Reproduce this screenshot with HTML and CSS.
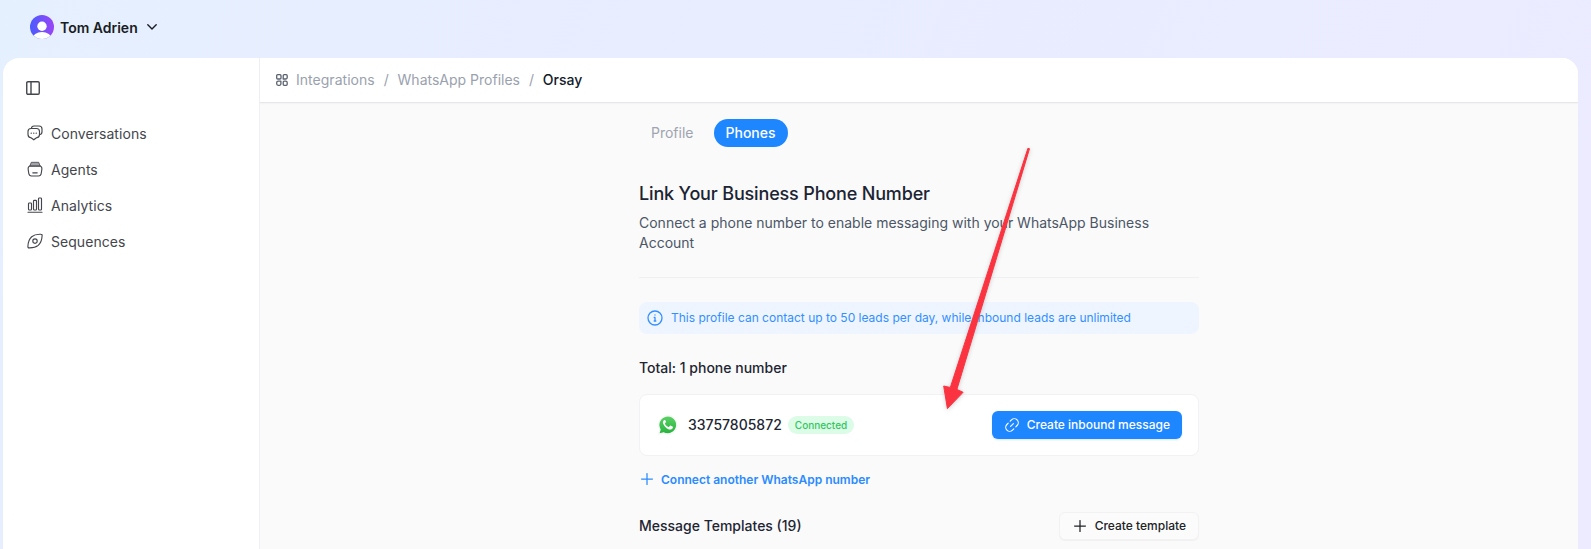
FILE: index.html
```html
<!DOCTYPE html>
<html lang="en">
<head>
<meta charset="utf-8">
<title>WhatsApp Profiles</title>
<link rel="stylesheet" href="styles.css">
</head>
<body>
<div class="app">
  <header class="topbar">
    <svg class="avatar" viewBox="0 0 24 24"><defs><linearGradient id="av" x1="0" y1="1" x2="1" y2="1"><stop offset="0" stop-color="#4a5cff"/><stop offset="1" stop-color="#9a45f5"/></linearGradient><clipPath id="avc"><circle cx="12" cy="12" r="12"/></clipPath></defs><g clip-path="url(#avc)"><rect width="24" height="24" fill="url(#av)"/><circle cx="12" cy="11.3" r="4.700" fill="#fff"/><ellipse cx="12" cy="24" rx="9.600" ry="7" fill="#fff"/></g></svg>
    <span class="user-name">Tom Adrien</span>
    <svg class="chevron" viewBox="0 0 10 6"><path d="M.8.8 5 5 9.200.8"/></svg>
  </header>
  <div class="panel">
    <aside class="sidebar">
      <svg class="icon toggle" viewBox="0 0 14 14"><rect x=".75" y=".75" width="12.500" height="12.500" rx="1.200"/><path d="M5 .75v12.500"/></svg>
      <nav class="nav">
        <a class="nav-item"><svg class="icon" viewBox="0 0 16 16"><path d="M4.400 3.300C4.600 1.700 5.300 1 7 1h5c2 0 3 1 3 3v2.800c0 1.800-.8 2.700-2.500 2.900"/><path d="M4 3.500h5.500c2 0 3 1 3 3v3c0 2-1 3-3 3.200L6.800 14.800 4 12.700C2 12.500 1 11.500 1 9.500v-3c0-2 1-3 3-3Z"/><path class="dots" d="M4.200 8.200h.1M6.700 8.200h.1M9.200 8.200h.1"/></svg>Conversations</a>
        <a class="nav-item"><svg class="icon" viewBox="0 0 16 16"><path fill="#a3a4a8" stroke-width=".8" d="M2.900 4.900 4.300 1.300h7.400l1.400 3.600Z"/><path d="M2.600 5h10.800c1.200.8 1.700 1.500 1.500 3l-.7 4.500c-.3 1.800-1 2.500-2.700 2.500h-7c-1.700 0-2.400-.7-2.700-2.500L1.100 8c-.2-1.500.3-2.200 1.500-3ZM5.800 11.800h4.400"/></svg>Agents</a>
        <a class="nav-item"><svg class="icon" viewBox="0 0 16 16"><path d="M1 15.200h14"/><rect x="1.500" y="6" width="3" height="7" rx=".8"/><rect x="6.500" y="3.400" width="3" height="9.600" rx=".8"/><rect x="11.500" y="1" width="3" height="12" rx=".8"/></svg>Analytics</a>
        <a class="nav-item"><svg class="icon" viewBox="0 0 16 16"><path d="M14 1.300C15 1.300 15.200 1.800 15.100 2.800 14.900 7 13.600 10.300 11.200 12.400 8.800 14.400 5.500 15 2 14.900 1.200 14.900.9 14.500.9 13.500 1 9.200 2.200 5.900 4.700 3.700 7.200 1.600 10.500 1.100 14 1.300Z"/><circle cx="8" cy="8.100" r="2.200"/></svg>Sequences</a>
      </nav>
    </aside>
    <main class="main">
      <div class="crumbs">
        <svg class="icon grid" viewBox="0 0 12 12"><path d="M1.800.700H4a1 1 0 0 1 1 1V4a1 1 0 0 1-1 1H1.700a1 1 0 0 1-1-1V1.800a1 1 0 0 1 1-1.100ZM8.200.700h2a1 1 0 0 1 1 1v1.800A1.500 1.500 0 0 1 9.700 5H7.200V1.700a1 1 0 0 1 1-1ZM2.200 7.200h2.700v2.600a1.500 1.500 0 0 1-1.500 1.500H2.200A1.500 1.500 0 0 1 .7 9.800V8.700a1.500 1.500 0 0 1 1.500-1.500ZM8.200 7.200h1.500a1.500 1.500 0 0 1 1.500 1.500v1.600a1 1 0 0 1-1 1h-2a1 1 0 0 1-1-1V8.200a1 1 0 0 1 1-1Z"/></svg>
        <span class="crumb c1">Integrations</span><span class="sep">/</span><span class="crumb">WhatsApp Profiles</span><span class="sep">/</span><span class="crumb current">Orsay</span>
      </div>
      <div class="content">
        <div class="tabs"><span class="tab">Profile</span><span class="tab active">Phones</span></div>
        <h1 class="title"><span>Link Your Business Phone Number</span></h1>
        <p class="desc"><span>Connect a phone number to enable messaging with your WhatsApp Business</span><br>Account</p>
        <div class="banner">
          <svg class="icon info" viewBox="0 0 16 16"><circle cx="8" cy="8" r="7"/><path d="M7.200 7.400H8V11M7.200 11h1.600M8 4.800v.3"/></svg>
          <span>This profile can contact up to 50 leads per day, while inbound leads are unlimited</span>
        </div>
        <h2 class="total"><span>Total: 1 phone number</span></h2>
        <div class="card">
          <svg class="wa" viewBox="0 0 20 20"><defs><linearGradient id="wg" x1="0" y1="0" x2="0" y2="1"><stop offset="0" stop-color="#5bd066"/><stop offset="1" stop-color="#27b43e"/></linearGradient></defs><path class="wa-rim" d="M.4 19.500 1.700 14.600A9.400 9.400 0 1 1 5.300 18.200Z"/><path fill="url(#wg)" d="M1.600 18.300 2.700 14.400A8.400 8.400 0 1 1 5.700 17.200Z"/><path fill="#fff" d="M7.300 5.300c-.3-.5-1-.5-1.400 0-.9.900-1.200 2-.8 3.200.8 2.500 3.200 4.900 5.900 5.900 1.500.5 3.500-.2 3.900-1.700.1-.6.100-.9-.3-1.100l-1.800-.9c-.4-.2-.7-.1-1 .3l-.7.800c-.2.300-.5.300-.9.100-1.500-.7-2.400-1.600-3.200-2.900-.2-.4-.1-.6.100-.8l.7-.9c.2-.2.200-.4.100-.7Z"/></svg>
          <span class="number">33757805872</span>
          <span class="badge">Connected</span>
          <button class="btn primary"><svg class="icon link" viewBox="0 0 14 14"><path d="M5.200 3.200 6.500 1.900A3.900 3.900 0 0 1 12.100 7.500L10.800 8.800M8.800 10.800 7.500 12.100A3.900 3.900 0 0 1 1.900 6.500L3.200 5.200M5.600 8.400l2.800-2.800"/></svg><span>Create inbound message</span></button>
        </div>
        <a class="connect"><svg class="icon plus" viewBox="0 0 12 12"><path d="M6 .6v10.800M.6 6h10.800"/></svg><span>Connect another WhatsApp number</span></a>
        <div class="templates">
          <h2><span>Message Templates (19)</span></h2>
          <button class="btn ghost"><svg class="icon plus" viewBox="0 0 12 12"><path d="M6 .6v10.800M.6 6h10.800"/></svg><span>Create template</span></button>
        </div>
      </div>
    </main>
  </div>
  <svg class="arrow" viewBox="0 0 100 280"><path d="M87.900 8.300 89.500 8.700 16.900 249.400 23.100 252.300 7.400 268.600 3.700 246 10.300 247.500Z"/></svg>
</div>
</body>
</html>
```
FILE: styles.css
```css
* { box-sizing: border-box; }
body { margin: 0; font-family: Inter, "Liberation Sans", sans-serif; font-size: 14px; color: #1d2533; }
.app { position: relative; width: 1591px; height: 549px; overflow: hidden; background: linear-gradient(115deg, #e5f0ff 0%, #e7eeff 20%, #e9ecff 60%, #edebff 100%); }
h1, h2, p { margin: 0; font-weight: 500; }
span, a { white-space: nowrap; }
.icon { flex: none; fill: none; stroke: currentColor; stroke-width: 1.15; stroke-linecap: round; stroke-linejoin: round; }

.topbar { display: flex; align-items: center; height: 57px; padding: 0 0 3px 30px; }
.avatar { width: 24px; height: 24px; }
.user-name { margin-left: 6px; font-weight: 600; color: #191c22; }
.chevron { width: 10px; height: 6px; margin-left: 9px; fill: none; stroke: #191c22; stroke-width: 1.4; stroke-linecap: round; stroke-linejoin: round; }

.panel { display: flex; width: 1575px; height: 491px; margin: 1px 0 0 3px; border-radius: 16px 16px 0 0; overflow: hidden; background: #fff; }
.sidebar { width: 257px; flex: none; padding: 23px 0 0 23px; border-right: 1px solid #f0f0f2; color: #44464d; }
.toggle { display: block; width: 14px; height: 14px; stroke-width: 1.4; }
.nav { display: flex; flex-direction: column; gap: 16px; margin-top: 28px; }
.nav-item { display: flex; align-items: center; gap: 8px; height: 20px; padding-left: 1px; font-size: 14px; letter-spacing: .05px; }
.nav-item .icon { width: 16px; height: 16px; }
.dots { stroke-width: 1.3; }

.main { flex: 1; background: #fafafa; }
.crumbs { display: flex; align-items: center; height: 45px; padding: 0 0 2px 16px; background: #fff; border-bottom: 1px solid #e6e7ea; font-size: 14px; color: #9aa1ae; box-shadow: 0 1px 1px #00000006; }
.grid { width: 12px; height: 12px; margin: 1px 8px 0 0; color: #5a616e; stroke-width: 1.3; }
.c1 { letter-spacing: .03px; }
.sep { margin: 0 8.900px; }
.crumb.current { color: #131a29; font-weight: 500; }

.content { width: 560px; margin: 16px 0 0 379px; }
.tabs { display: flex; gap: 8px; height: 28px; }
.tab { display: flex; align-items: center; padding: 0 12px 1px; border-radius: 14px; color: #9ea4b0; }
.tab.active { background: #1e86ff; color: #fff; font-weight: 500; }
.title { margin-top: 33px; font-size: 18px; line-height: 28px; letter-spacing: -.16px; color: #1b2433; }
.desc { margin-top: 5px; line-height: 20px; font-weight: 400; color: #4c5667; }
.desc::after { content: ""; display: block; height: 1px; margin-top: 24px; background: #eff0f2; }
.banner { display: flex; align-items: center; gap: 8px; height: 32px; margin-top: 24px; padding: 0 0 1px 8px; border-radius: 8px; background: #eef5ff; font-size: 12px; color: #338fff; }
.info { width: 16px; height: 16px; margin-top: 1px; stroke-width: 1.3; }
.total { margin-top: 24px; font-size: 14px; line-height: 20px; }
.card { display: flex; align-items: center; height: 62px; margin-top: 16px; padding: 0 16px 1px 18px; border: 1px solid #f1f2f3; border-radius: 8px; background: #fff; }
.wa { width: 20px; height: 20px; }
.wa-rim { fill: #fff; stroke: #ececef; stroke-width: .5; }
.number { margin-left: 10px; font-weight: 500; }
.badge { margin-left: 6px; padding: 0 7px; height: 18px; border-radius: 9px; background: #dcfce7; font-size: 10px; line-height: 18px; font-weight: 500; color: #31c661; }
.btn { display: flex; align-items: center; margin: 0; border: 0; font: 500 12px Inter, sans-serif; }
.primary { height: 28px; margin-left: auto; padding: 0 12px 0 13px; gap: 8px; border-radius: 6px; background: #1e86ff; color: #fff; box-shadow: 0 1px 2px #1e86ff30; }
.link { width: 14px; height: 14px; }
.connect { display: flex; align-items: center; gap: 8px; height: 20px; margin-top: 13px; padding-left: 2px; font-size: 12px; font-weight: 600; color: #2b8bff; }
.plus { width: 12px; height: 12px; stroke-width: 1.25; }
.templates { display: flex; align-items: center; justify-content: space-between; height: 28px; margin-top: 23px; }
.templates h2 { margin-top: -1px; font-size: 14px; }
.ghost { height: 28px; padding: 0 12px 1px 14px; gap: 9px; border: 1px solid #f2f2f3; border-radius: 6px; background: #fbfbfb; color: #202226; box-shadow: 0 1px 1px #0000000a; }

.arrow { position: absolute; left: 940px; top: 140px; width: 100px; height: 280px; filter: drop-shadow(0 1px 2px #00000030); fill: #fb3340; stroke: #fb3340; stroke-width: 1; stroke-linejoin: round; }
```
